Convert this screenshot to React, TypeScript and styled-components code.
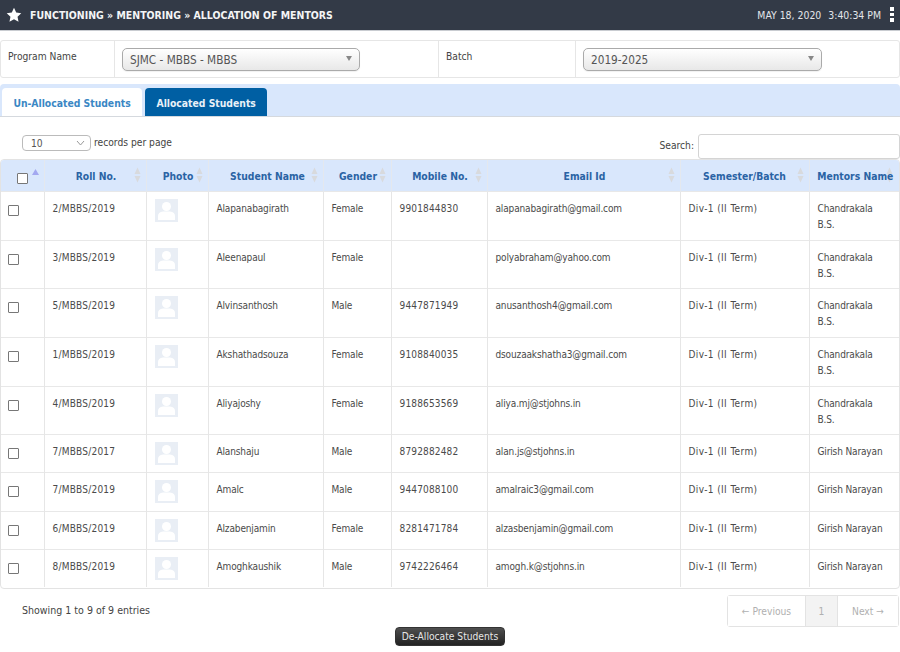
import React from "react";
import styled, { createGlobalStyle } from "styled-components";

const Global = createGlobalStyle`
  html, body { margin: 0; padding: 0; background: #fff; }
  body { font-family: "DejaVu Sans Condensed", "DejaVu Sans", sans-serif; font-size: 10.2px; color: #444; width: 900px; height: 652px; overflow: hidden; }
  * { box-sizing: border-box; }
`;

const Page = styled.div`width: 900px; height: 652px; display: flex; flex-direction: column;`;

const TopBar = styled.header`
  height: 31px; background: #333a47; border-bottom: 1px solid #c9ccd1; display: flex; align-items: center;
  padding: 0 6px 1px 6px; color: #fff;
`;
const Crumb = styled.div`
  margin-left: 8px; font-weight: 700; font-size: 10.47px; flex: 1; color: #f4f5f6; white-space: nowrap; padding-top: 1px;
`;
const Clock = styled.div`font-size: 10.4px; color: #e4e6ea; display: flex; gap: 7px; margin-right: 9px; white-space: nowrap;`;
const Dots = styled.div`display: flex; flex-direction: column; gap: 2px;
  span { width: 4px; height: 3.4px; background: #fff; display: block; }`;

const FilterRow = styled.section`
  margin-top: 9px; height: 38px; border: 1px solid #e6e6e6; border-radius: 3px; display: grid;
  grid-template-columns: 114px 324px 137px 1fr;
`;
const FilterLabel = styled.div`padding: 10px 7px 0 7px; font-size: 10.2px; color: #444; border-right: 1px solid #e6e6e6;`;
const FilterCell = styled.div<{ $last?: boolean }>`padding: 7px 0 0 7px; ${p => (p.$last ? "" : "border-right: 1px solid #e6e6e6;")}`;
const Select = styled.div<{ $w: number }>`
  width: ${p => p.$w}px; height: 23px; border: 1px solid #aaa; border-radius: 5px;
  background: linear-gradient(#fff, #f1f1f1 60%, #e8e8e8); display: flex; align-items: center; justify-content: space-between;
  padding: 0 7px 0 7px; font-size: 11.7px; color: #555; box-shadow: 0 1px 1px rgba(0,0,0,.06);
  &::after { content: ""; border-left: 3.5px solid transparent; border-right: 3.5px solid transparent; border-top: 5px solid #888; margin-top: -2px; }
`;

const TabBand = styled.nav`
  margin-top: 6px; height: 33px; background: #d9e7fc; border-bottom: 1px solid #d5d9de; border-radius: 4px 4px 0 0; padding: 4px 0 0 2px; display: flex; gap: 3px;
`;
const Tab = styled.div<{ $active?: boolean }>`
  height: 28px; padding: 2px 11.4px 0; display: flex; align-items: center; font-weight: 700; font-size: 10.3px; border-radius: 4px 4px 0 0;
  background: ${p => (p.$active ? "#005fa3" : "#fff")}; color: ${p => (p.$active ? "#e9f1f8" : "#3a87c4")};
`;

const Controls = styled.div`height: 42px; display: flex; justify-content: space-between; padding: 17px 0 0 22px;`;
const Length = styled.div`display: flex; align-items: flex-start; gap: 3px; font-size: 10.2px; color: #444; line-height: 13px;`;
const LengthSelect = styled.div`
  width: 69px; height: 16px; border: 1px solid #bbb; border-radius: 4px; margin: 1px 0 0; padding-left: 8px; display: flex; justify-content: space-between; align-items: center; font-size: 10.2px; color: #555;
  svg { margin-right: 5px; }
`;
const LengthLabel = styled.span`padding-top: 2px;`;
const Search = styled.label`display: flex; align-items: flex-start; gap: 4px; font-size: 10.2px; color: #444; height: 25px; line-height: 24px;`;
const SearchInput = styled.div`width: 202px; height: 25px; border: 1px solid #d4d4d4; border-radius: 3px; background: #fff;`;

const TableWrap = styled.div`border: 1px solid #e3e3e3; border-radius: 4px; overflow: hidden; height: 430px;`;
const Table = styled.table`width: 100%; table-layout: fixed; border-collapse: collapse;`;
const Th = styled.th<{ $w: number }>`
  width: ${p => p.$w}px; height: 31px; background: #d9e7fc; color: #2a63a4; font-size: 10.3px; font-weight: 700; padding: 1px 0 0; border-left: 1px solid #e4e8ee; position: relative; text-align: center; white-space: nowrap;
  &:first-child { border-left: none; }
`;
const ThLabel = styled.span<{ $shift: number }>`display: inline-block; transform: translateX(${p => p.$shift}px);`;
const SortIcon = styled.svg<{ $right: number }>`position: absolute; right: ${p => p.$right}px; top: 7px;`;
const AscIcon = styled.svg`position: absolute; right: 5px; top: 9px;`;
const Td = styled.td<{ $track?: number }>`border-left: 1px solid #e6e6e6; padding: 9px 8px 0 8px; vertical-align: top; font-size: 10px; letter-spacing: ${p => p.$track ?? -0.14}px; line-height: 16px; color: #4a4a4a;
  &:first-child { border-left: none; padding: 0; }
`;
const Tr = styled.tr<{ $h: number }>`height: ${p => p.$h}px; border-top: 1px solid #e8e8e8;`;
const Check = styled.div<{ $head?: boolean }>`
  width: 11px; height: 11px; border: 1px solid #777; border-radius: 1px; background: #fff;
  margin: ${p => (p.$head ? "6px 0 0 16px" : "13px 0 0 7px")};
`;
const Avatar = styled.svg`display: block; margin-top: -2px;`;

const Footer = styled.div`display: flex; justify-content: space-between; padding: 6px 1px 0 22px;`;
const Info = styled.div`font-size: 10.55px; color: #444; padding-top: 9px;`;
const Pager = styled.div`display: flex; height: 32px; border: 1px solid #e3e3e3; border-radius: 3px; color: #b0b0b0; font-size: 10.2px;`;
const PageBtn = styled.div<{ $w: number; $current?: boolean }>`
  width: ${p => p.$w}px; display: flex; align-items: center; justify-content: center; background: ${p => (p.$current ? "#f3f3f3" : "#fff")};
  ${p => (p.$current ? "border-left: 1px solid #e3e3e3; border-right: 1px solid #e3e3e3;" : "")}
`;
const Actions = styled.div`display: flex; justify-content: center;`;
const Button = styled.div`
  height: 19px; width: 110px; border-radius: 4px; background: linear-gradient(#4f4f4f, #222); color: #e6e6e6; font-size: 10.2px; display: flex; align-items: center; justify-content: center; border: 1px solid #333;
`;

const widths = [43, 102, 62, 115, 68, 96, 193, 129, 90];
const heads: { t: string; shift: number; right: number }[] = [
  { t: "", shift: 0, right: 0 },
  { t: "Roll No.", shift: 1, right: 5 },
  { t: "Photo", shift: 1, right: 5 },
  { t: "Student Name", shift: 2, right: 5 },
  { t: "Gender", shift: 1, right: 5 },
  { t: "Mobile No.", shift: 1, right: 5 },
  { t: "Email Id", shift: 1, right: 5 },
  { t: "Semester/Batch", shift: 0, right: 5 },
  { t: "Mentors Name", shift: 1, right: 6 },
];

const CK = "Chandrakala B.S.";
const GN = "Girish Narayan";
const D = "Div-1 (II Term)";
const rows = [
  ["2/MBBS/2019", "Alapanabagirath", "Female", "9901844830", "alapanabagirath@gmail.com", CK, 49],
  ["3/MBBS/2019", "Aleenapaul", "Female", "", "polyabraham@yahoo.com", CK, 48],
  ["5/MBBS/2019", "Alvinsanthosh", "Male", "9447871949", "anusanthosh4@gmail.com", CK, 49],
  ["1/MBBS/2019", "Akshathadsouza", "Female", "9108840035", "dsouzaakshatha3@gmail.com", CK, 49],
  ["4/MBBS/2019", "Aliyajoshy", "Female", "9188653569", "aliya.mj@stjohns.in", CK, 48],
  ["7/MBBS/2017", "Alanshaju", "Male", "8792882482", "alan.js@stjohns.in", GN, 38],
  ["7/MBBS/2019", "Amalc", "Male", "9447088100", "amalraic3@gmail.com", GN, 39],
  ["6/MBBS/2019", "Alzabenjamin", "Female", "8281471784", "alzasbenjamin@gmail.com", GN, 38],
  ["8/MBBS/2019", "Amoghkaushik", "Male", "9742226464", "amogh.k@stjohns.in", GN, 38],
] as const;

const Sort = ({ right }: { right: number }) => (
  <SortIcon $right={right} width="7" height="16" viewBox="0 0 7 16">
    <path d="M3.5 0.5 L6.5 7 H0.5Z M3.5 15.5 L6.5 9 H0.5Z" fill="#d8dadd" />
  </SortIcon>
);

const Person = () => (
  <Avatar width="23" height="23" viewBox="0 0 23 23">
    <rect width="23" height="23" fill="#e9eef5" />
    <circle cx="11.5" cy="7.5" r="4.5" fill="#fff" />
    <path d="M3 21 V17 Q3 13 8 12.5 H15 Q20 13 20 17 V21Z" fill="#fff" />
  </Avatar>
);

export default function App() {
  return (
    <Page>
      <Global />
      <TopBar>
        <svg width="16" height="16" viewBox="0 0 24 24">
          <path fill="#fff" d="M12 1.2l3.3 7 7.6 1-5.6 5.3 1.5 7.6L12 18.3l-6.8 3.8 1.5-7.6L1.1 9.2l7.6-1z" />
        </svg>
        <Crumb>FUNCTIONING » MENTORING » ALLOCATION OF MENTORS</Crumb>
        <Clock><span>MAY 18, 2020</span><span>3:40:34 PM</span></Clock>
        <Dots><span /><span /><span /></Dots>
      </TopBar>
      <FilterRow>
        <FilterLabel>Program Name</FilterLabel>
        <FilterCell><Select $w={238}>SJMC - MBBS - MBBS</Select></FilterCell>
        <FilterLabel>Batch</FilterLabel>
        <FilterCell $last><Select $w={239}>2019-2025</Select></FilterCell>
      </FilterRow>
      <TabBand>
        <Tab>Un-Allocated Students</Tab>
        <Tab $active>Allocated Students</Tab>
      </TabBand>
      <Controls>
        <Length>
          <LengthSelect>10
            <svg width="9" height="6" viewBox="0 0 9 6"><path d="M1 1l3.5 4L8 1" fill="none" stroke="#999" /></svg>
          </LengthSelect>
          <LengthLabel>records per page</LengthLabel>
        </Length>
        <Search>Search:<SearchInput /></Search>
      </Controls>
      <TableWrap>
        <Table>
          <thead>
            <tr>
              {heads.map((h, i) => (
                <Th key={i} $w={widths[i]}>
                  {i === 0 ? (
                    <>
                      <Check $head />
                      <AscIcon width="7" height="6" viewBox="0 0 7 6"><path d="M3.5 0 L7 6 H0Z" fill="#a3a8f0" /></AscIcon>
                    </>
                  ) : (
                    <>
                      <Sort right={h.right} />
                      <ThLabel $shift={h.shift}>{h.t}</ThLabel>
                    </>
                  )}
                </Th>
              ))}
            </tr>
          </thead>
          <tbody>
            {rows.map(r => (
              <Tr key={r[0] + r[1]} $h={r[6]}>
                <Td><Check /></Td>
                <Td $track={0.22}>{r[0]}</Td>
                <Td><Person /></Td>
                <Td>{r[1]}</Td>
                <Td>{r[2]}</Td>
                <Td $track={0.16}>{r[3]}</Td>
                <Td>{r[4]}</Td>
                <Td $track={0.39}>{D}</Td>
                <Td>{r[5]}</Td>
              </Tr>
            ))}
          </tbody>
        </Table>
      </TableWrap>
      <Footer>
        <Info>Showing 1 to 9 of 9 entries</Info>
        <Pager>
          <PageBtn $w={77}>← Previous</PageBtn>
          <PageBtn $w={33} $current>1</PageBtn>
          <PageBtn $w={60}>Next →</PageBtn>
        </Pager>
      </Footer>
      <Actions><Button>De-Allocate Students</Button></Actions>
    </Page>
  );
}
